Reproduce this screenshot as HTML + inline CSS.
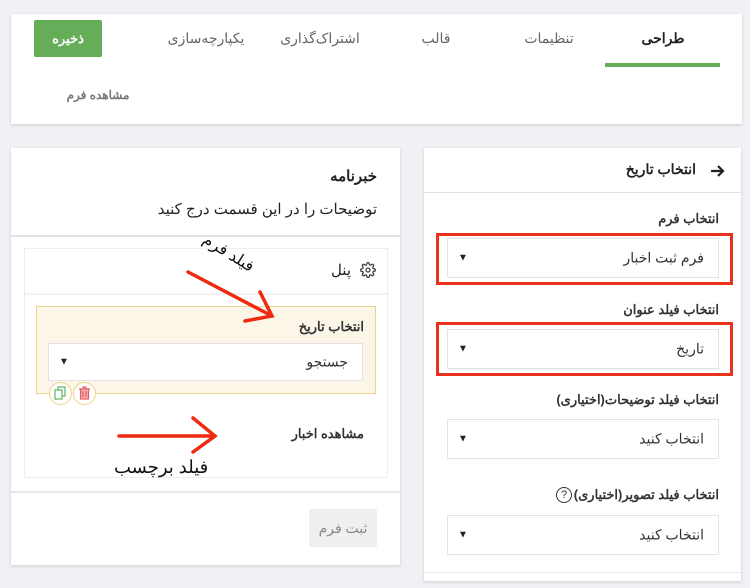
<!DOCTYPE html>
<html><head><meta charset="utf-8"><style>
*{box-sizing:border-box;margin:0;padding:0}
body{width:750px;height:588px;background:#f0f1f5;position:relative;overflow:hidden;font-family:"Liberation Sans","Noto Sans CJK SC",sans-serif;color:#333}
.a{position:absolute}
.card{position:absolute;background:#fff;box-shadow:0 1px 3px rgba(0,0,0,.15)}
.t{position:absolute;white-space:nowrap;font-size:13px;direction:rtl}
.c{transform:translateX(-50%)}
.r{transform:translateX(-100%)}
.sel{position:absolute;background:#fff;border:1px solid #e3e3e3}
.sel .v{position:absolute;right:14px;top:50%;transform:translateY(-50%);font-size:14px;color:#333;direction:rtl}
.sel .ar{position:absolute;left:10px;top:50%;transform:translateY(-50%);font-size:10px;color:#222}
.red{position:absolute;border:3px solid #e8321c}
.b{font-weight:bold}
</style></head><body>
<div class="card" style="left:11px;top:14px;width:731px;height:110px"></div>
<div class="a" style="left:34px;top:20px;width:68px;height:37px;background:#66ad5a;border-radius:2px;color:#fff;font-weight:bold;font-size:13px;text-align:center;line-height:37px">ذخیره</div>
<div class="t b c" style="left:663px;top:30px;color:#222;font-size:14px">طراحی</div>
<div class="a" style="left:605px;top:63px;width:115px;height:4px;background:#66ad5a"></div>
<div class="t c" style="left:549px;top:30px;color:#666;font-size:14px">تنظیمات</div>
<div class="t c" style="left:436px;top:30px;color:#666;font-size:14px">قالب</div>
<div class="t c" style="left:320px;top:30px;color:#666;font-size:14px">اشتراک‌گذاری</div>
<div class="t c" style="left:206px;top:30px;color:#666;font-size:14px">یکپارچه‌سازی</div>
<div class="t c b" style="left:98px;top:88px;color:#777;font-size:12px">مشاهده فرم</div>

<!-- left panel -->
<div class="card" style="left:11px;top:148px;width:389px;height:417px"></div>
<div class="t b r" style="left:377px;top:167px;font-size:15px;color:#222">خبرنامه</div>
<div class="t r" style="left:377px;top:200px;font-size:15px;color:#222">توضیحات را در این قسمت درج کنید</div>
<div class="a" style="left:11px;top:235px;width:389px;height:2px;background:#e2e2e2"></div>
<div class="a" style="left:24px;top:248px;width:364px;height:230px;border:1px solid #eee"></div>
<div class="a" style="left:25px;top:293px;width:362px;height:2px;background:#f2f2f2"></div>
<svg class="a" style="left:360px;top:262px" width="16" height="16" viewBox="0 0 24 24" fill="none" stroke="#444" stroke-width="2"><circle cx="12" cy="12" r="3"/><path d="M19.4 15a1.7 1.7 0 0 0 .3 1.8l.1.1a2 2 0 1 1-2.8 2.8l-.1-.1a1.7 1.7 0 0 0-1.8-.3 1.7 1.7 0 0 0-1 1.5V21a2 2 0 1 1-4 0v-.1a1.7 1.7 0 0 0-1.1-1.5 1.7 1.7 0 0 0-1.8.3l-.1.1a2 2 0 1 1-2.8-2.8l.1-.1a1.7 1.7 0 0 0 .3-1.8 1.7 1.7 0 0 0-1.5-1H3a2 2 0 1 1 0-4h.1a1.7 1.7 0 0 0 1.5-1.1 1.7 1.7 0 0 0-.3-1.8l-.1-.1a2 2 0 1 1 2.8-2.8l.1.1a1.7 1.7 0 0 0 1.8.3H9a1.7 1.7 0 0 0 1-1.5V3a2 2 0 1 1 4 0v.1a1.7 1.7 0 0 0 1 1.5 1.7 1.7 0 0 0 1.8-.3l.1-.1a2 2 0 1 1 2.8 2.8l-.1.1a1.7 1.7 0 0 0-.3 1.8V9a1.7 1.7 0 0 0 1.5 1H21a2 2 0 1 1 0 4h-.1a1.7 1.7 0 0 0-1.5 1z"/></svg>
<div class="t r" style="left:351px;top:261px;font-size:15px;color:#222">پنل</div>
<div class="a" style="left:36px;top:306px;width:340px;height:88px;background:#fcf6e9;border:1px solid #ecd38f"></div>
<div class="t b r" style="left:364px;top:319px;color:#333">انتخاب تاریخ</div>
<div class="sel" style="left:48px;top:343px;width:315px;height:38px"><span class="v">جستجو</span><span class="ar">▼</span></div>
<div class="a" style="left:49px;top:382px;width:23px;height:23px;border-radius:50%;border:1px solid #ecd38f;background:#fff"></div>
<div class="a" style="left:73px;top:382px;width:23px;height:23px;border-radius:50%;border:1px solid #ecd38f;background:#fff"></div>
<svg class="a" style="left:54px;top:386px" width="13" height="14" viewBox="0 0 13 14" fill="none" stroke="#5cb85c" stroke-width="1.2"><rect x="1" y="4" width="7" height="9"/><path d="M4 4V1h7v9H8"/></svg>
<svg class="a" style="left:78px;top:386px" width="13" height="14" viewBox="0 0 13 14" fill="none" stroke="#e06060" stroke-width="1.2"><path d="M1 3h11M5 3V1h3v2"/><rect x="2.5" y="3" width="8" height="10" fill="#f3b0b0"/><path d="M5 5v6M8 5v6"/></svg>
<div class="t b r" style="left:364px;top:426px;color:#333">مشاهده اخبار</div>
<div class="a" style="left:11px;top:491px;width:389px;height:2px;background:#e8e8e8"></div>
<div class="a" style="left:309px;top:509px;width:68px;height:38px;background:#efefef;border-radius:2px;color:#888;font-size:14px;text-align:center;line-height:38px">ثبت فرم</div>

<svg class="a" style="left:0;top:0" width="750" height="588" fill="none" stroke="#ee2a10" stroke-width="3.5" stroke-linecap="round">
<path d="M188 272L272 316M260 292L272 316L245 321"/>
<path d="M119 436H215M193 418L215 436L193 452"/>
</svg>
<div class="t" style="left:200px;top:243px;font-size:16px;color:#111;transform:rotate(32deg);transform-origin:center">فیلد فرم</div>
<div class="t" style="left:114px;top:457px;font-size:18px;color:#111">فیلد برچسب</div>

<!-- right panel -->
<div class="card" style="left:424px;top:148px;width:317px;height:433px"></div>
<div class="a" style="left:424px;top:192px;width:317px;height:1px;background:#e2e2e2"></div>
<div class="t b r" style="left:696px;top:161px;font-size:14px;color:#222">انتخاب تاریخ</div>
<svg class="a" style="left:710px;top:164px" width="15" height="14" viewBox="0 0 15 14" fill="none" stroke="#222" stroke-width="2.2"><path d="M1 7h12M8 2l5 5-5 5"/></svg>
<div class="t b r" style="left:719px;top:211px">انتخاب فرم</div>
<div class="red" style="left:436px;top:233px;width:297px;height:52px"></div>
<div class="sel" style="left:447px;top:238px;width:272px;height:40px"><span class="v">فرم ثبت اخبار</span><span class="ar">▼</span></div>
<div class="t b r" style="left:719px;top:302px">انتخاب فیلد عنوان</div>
<div class="red" style="left:436px;top:322px;width:297px;height:54px"></div>
<div class="sel" style="left:447px;top:329px;width:272px;height:40px"><span class="v">تاریخ</span><span class="ar">▼</span></div>
<div class="t b r" style="left:719px;top:392px">انتخاب فیلد توضیحات(اختیاری)</div>
<div class="sel" style="left:447px;top:419px;width:272px;height:40px"><span class="v">انتخاب کنید</span><span class="ar">▼</span></div>
<div class="t b r" style="left:719px;top:487px">انتخاب فیلد تصویر(اختیاری)</div>
<div class="a" style="left:556px;top:487px;width:16px;height:16px;border-radius:50%;border:1.3px solid #333;font-size:11px;text-align:center;line-height:14px;color:#333">?</div>
<div class="sel" style="left:447px;top:515px;width:272px;height:40px"><span class="v">انتخاب کنید</span><span class="ar">▼</span></div>
<div class="a" style="left:424px;top:572px;width:317px;height:1px;background:#ececec"></div>
</body></html>
